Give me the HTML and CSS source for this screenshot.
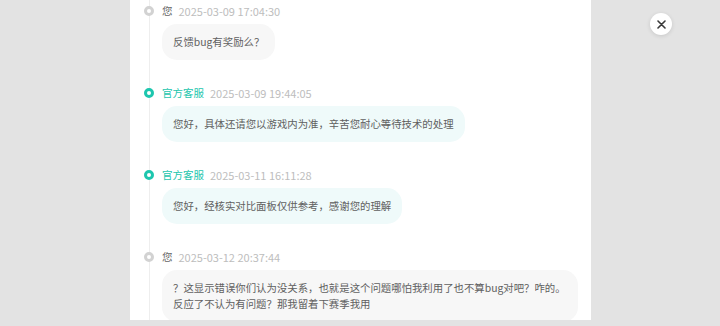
FILE: index.html
```html
<!DOCTYPE html>
<html lang="zh-CN">
<head>
  <meta charset="UTF-8">
  <meta name="viewport" content="width=device-width, initial-scale=1.0">
  <title>反馈记录</title>
  <link rel="stylesheet" href="styles.css">
</head>
<body>
  <div class="overlay">
    <div class="panel">
      <!-- Feedback timeline -->
      <div class="timeline">
        <div class="entry user">
          <div class="entry-head">
            <span class="dot"></span>
            <span class="who">您</span>
            <span class="time">2025-03-09 17:04:30</span>
          </div>
          <div class="bubble">反馈bug有奖励么？</div>
        </div>

        <div class="entry staff">
          <div class="entry-head">
            <span class="dot"></span>
            <span class="who">官方客服</span>
            <span class="time">2025-03-09 19:44:05</span>
          </div>
          <div class="bubble">您好，具体还请您以游戏内为准，辛苦您耐心等待技术的处理</div>
        </div>

        <div class="entry staff">
          <div class="entry-head">
            <span class="dot"></span>
            <span class="who">官方客服</span>
            <span class="time">2025-03-11 16:11:28</span>
          </div>
          <div class="bubble">您好，经核实对比面板仅供参考，感谢您的理解</div>
        </div>

        <div class="entry user">
          <div class="entry-head">
            <span class="dot"></span>
            <span class="who">您</span>
            <span class="time">2025-03-12 20:37:44</span>
          </div>
          <div class="bubble">？这显示错误你们认为没关系，也就是这个问题哪怕我利用了也不算bug对吧？咋的。反应了不认为有问题？那我留着下赛季我用</div>
        </div>
      </div>
    </div>

    <button class="close-btn" aria-label="关闭">
      <svg width="9" height="9" viewBox="0 0 9 9">
        <path d="M1 1 L8 8 M8 1 L1 8" stroke="#3a3a3a" stroke-width="1.6" stroke-linecap="round"/>
      </svg>
    </button>
  </div>
</body>
</html>
```

FILE: styles.css
```css
/* General Styles */
body {
  margin: 0;
  height: 326px;
  overflow: hidden;
  background: #e3e3e3;
  font-family: "Noto Sans CJK SC", "Noto Sans", sans-serif;
}

.overlay {
  position: relative;
  height: 326px;
  display: flex;
  justify-content: center;
}

.panel {
  width: 461px;
  height: 320px;
  margin-left: 1px;
  background: #fff;
  overflow: hidden;
}

.timeline {
  margin: -6px 0 0 19px;
}

.entry {
  border-left: 1px solid #eeeeee;
  padding: 10px 0 16px 12px;
}

.entry-head {
  position: relative;
  display: flex;
  align-items: center;
  gap: 6px;
  height: 14px;
  font-size: 10.5px;
  line-height: 14px;
}

.entry-head .dot {
  position: absolute;
  left: -18px;
  top: 2px;
  width: 4px;
  height: 4px;
  border: 3px solid #d2d2d2;
  border-radius: 50%;
  background: #fff;
}

.entry-head .who {
  color: #666;
}

.entry-head .time {
  color: #bdbdbd;
  font-size: 11px;
}

.entry.staff .dot {
  border-color: #1dc6ae;
}

.entry.staff .who {
  color: #1dc6ae;
}

.bubble {
  display: inline-block;
  margin-top: 6px;
  padding: 10px 11px;
  max-width: 394px;
  border-radius: 15px;
  background: #f7f7f7;
  color: #606060;
  font-size: 10.4px;
  line-height: 16px;
}

.entry.staff .bubble {
  background: #effafa;
}

.close-btn {
  position: absolute;
  top: 13px;
  left: 650px;
  width: 22px;
  height: 22px;
  padding: 0;
  border: none;
  border-radius: 50%;
  background: #fff;
  box-shadow: 0 1px 4px rgba(0, 0, 0, 0.12);
  display: flex;
  align-items: center;
  justify-content: center;
}
```
